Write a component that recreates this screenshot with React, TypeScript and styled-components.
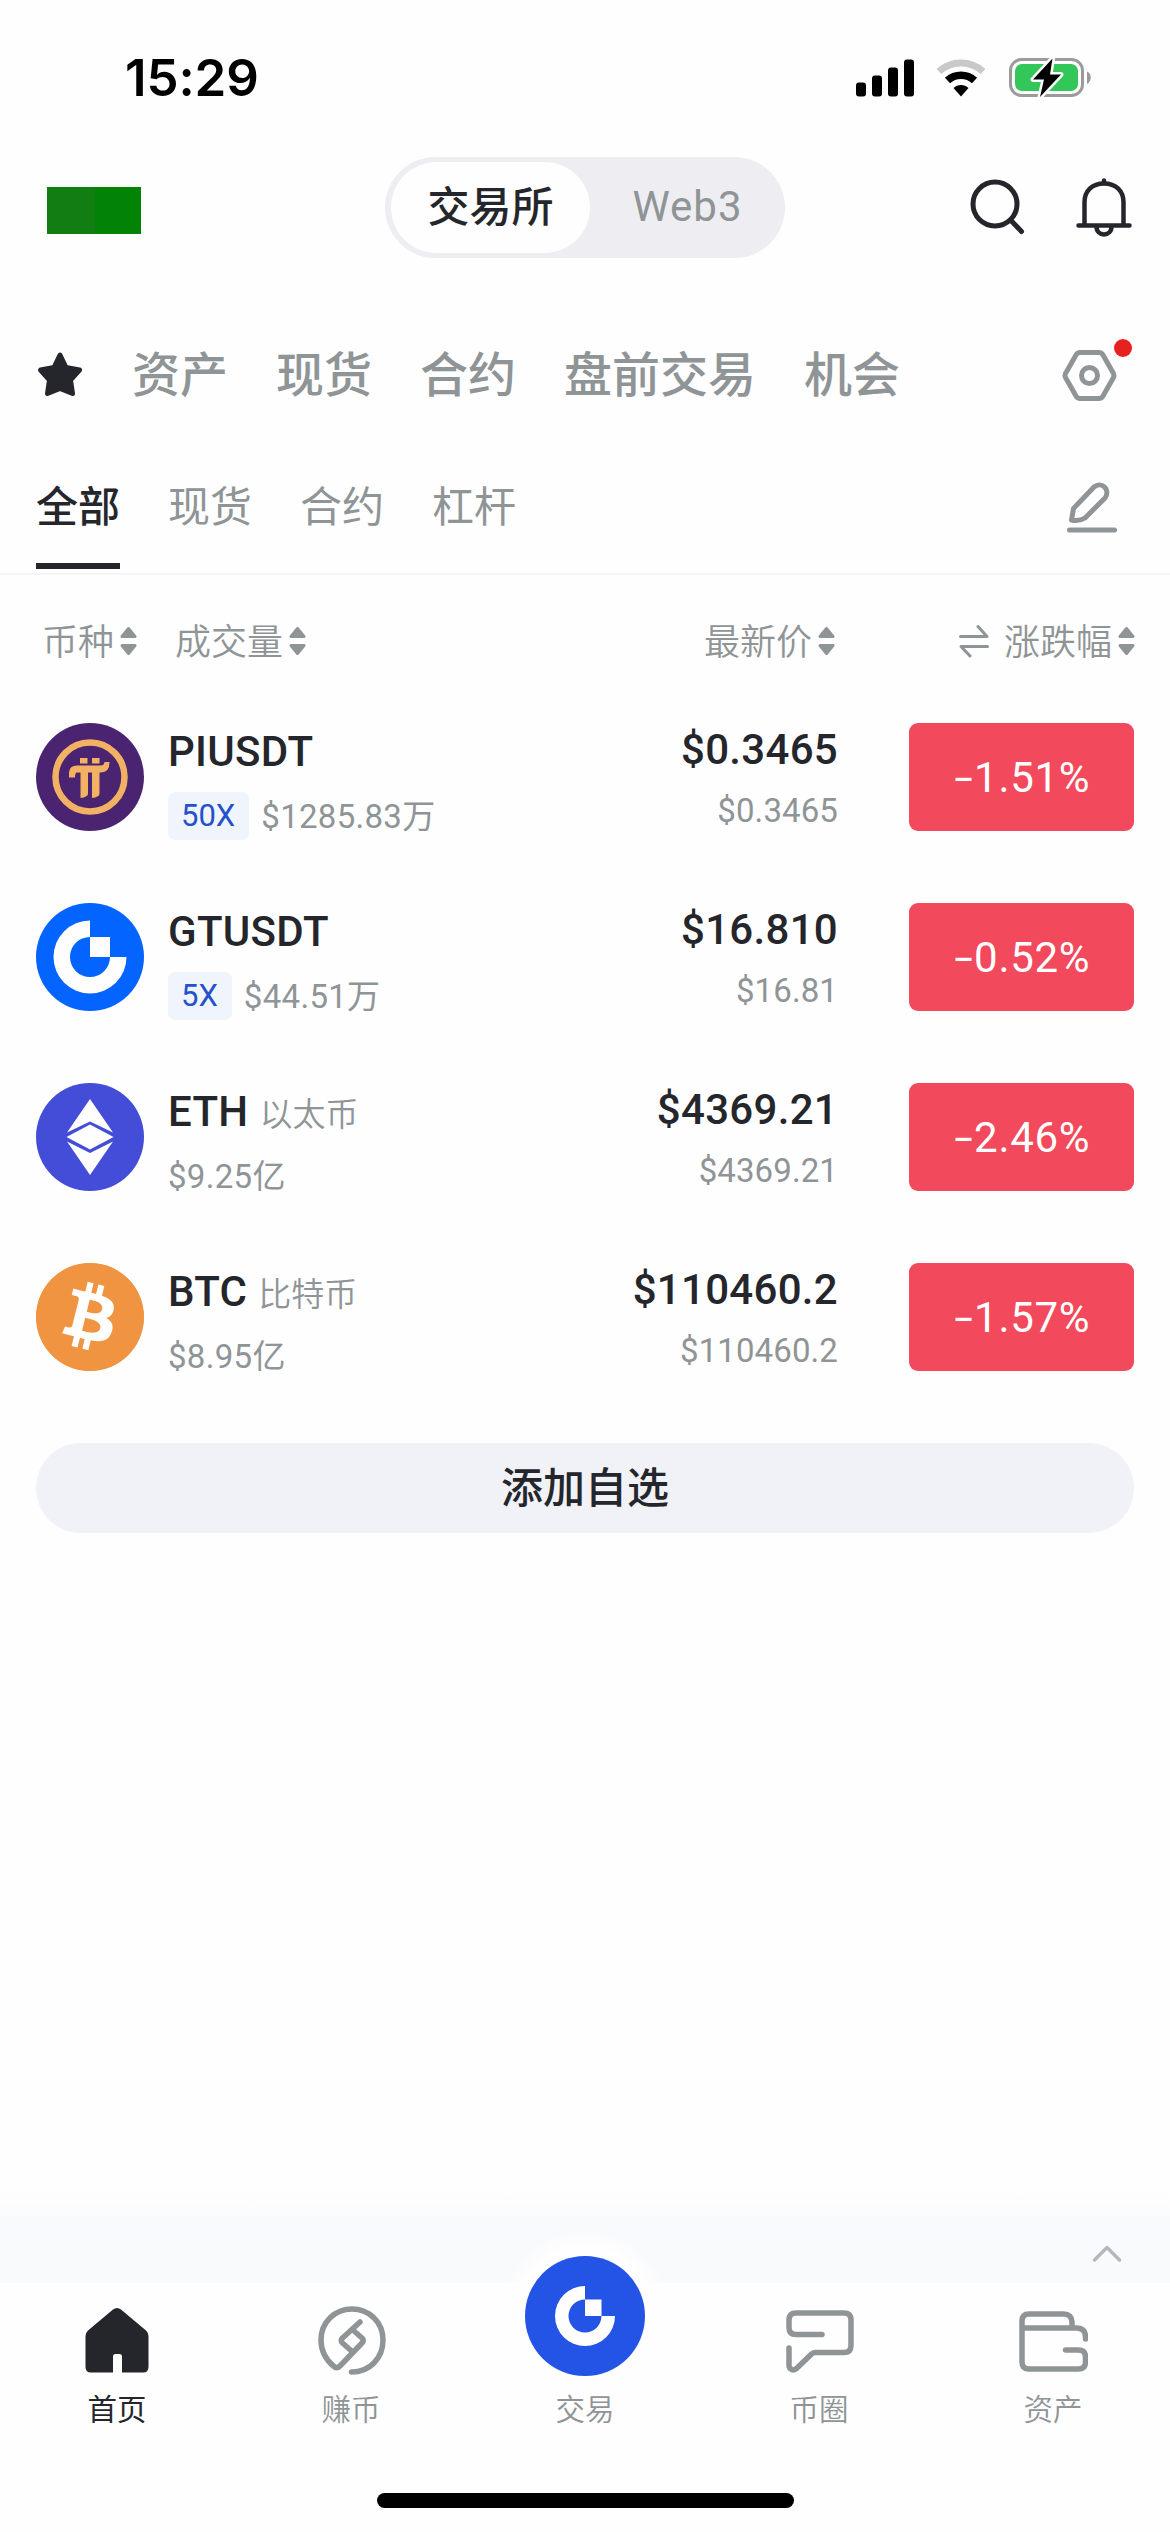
import React from "react";
import styled, { createGlobalStyle } from "styled-components";
import { SiBitcoin } from "react-icons/si";

const ink = "#25262c";
const muted = "#8f9496";

const GlobalStyle = createGlobalStyle`
  *, *::before, *::after { box-sizing: border-box; }
  body {
    margin: 0;
    background: #fefefe;
    font-family: Roboto, "Noto Sans CJK SC", sans-serif;
    color: ${ink};
  }
  svg { display: block; flex: none; }
`;

const Screen = styled.main`
  width: 1170px;
  height: 2532px;
  display: flex;
  flex-direction: column;
  background: #fefefe;
  overflow: hidden;
  white-space: nowrap;
`;

/* Status bar */
const StatusBar = styled.div`
  height: 156px;
  padding: 0 79px 0 125px;
  display: flex;
  align-items: center;
  justify-content: space-between;
`;
const Clock = styled.span`
  font-family: Inter, sans-serif;
  font-weight: 600;
  font-size: 51px;
  line-height: 60px;
  letter-spacing: -0.1px;
  color: #000;
`;
const StatusIcons = styled.div`
  display: flex;
  align-items: center;
`;

/* Header */
const Header = styled.header`
  height: 102px;
  padding: 0 38px 0 47px;
  display: grid;
  grid-template-columns: 338px 400px 1fr;
`;
const Brand = styled.div`
  width: 94px;
  height: 47px;
  margin-top: 31px;
  background: linear-gradient(90deg, #117d13 0 48px, #038306 48px);
`;
const Switch = styled.div`
  height: 101px;
  margin-top: 1px;
  padding: 5px 6px;
  display: flex;
  border-radius: 51px;
  background: #ededf2;
`;
const SwitchOption = styled.div<{ $active?: boolean }>`
  width: ${(p) => (p.$active ? 199 : 189)}px;
  height: 91px;
  padding-left: ${(p) => (p.$active ? 0 : 6)}px;
  border-radius: 46px;
  text-align: center;
  font-size: 42px;
  font-weight: ${(p) => (p.$active ? 500 : 400)};
  line-height: ${(p) => (p.$active ? 91 : 90)}px;
  letter-spacing: ${(p) => (p.$active ? 0 : 1)}px;
  color: ${(p) => (p.$active ? ink : muted)};
  background: ${(p) => (p.$active ? "#fefefe" : "transparent")};
`;
const HeaderActions = styled.div`
  display: flex;
  align-items: center;
  justify-content: flex-end;
  gap: 50px;
`;

/* Tabs */
const Tabs = styled.nav`
  height: 96px;
  margin-top: 68px;
  padding: 0 36px;
  display: flex;
  align-items: center;
  gap: 48px;
`;
const Tab = styled.span`
  font-size: 48px;
  font-weight: 500;
  line-height: 92px;
  padding-top: 3px;
  color: ${muted};
`;
const TabsEnd = styled.div`
  margin-left: auto;
  height: 96px;
`;
const SubTabs = styled.nav`
  height: 153px;
  padding: 23px 53px 0 36px;
  display: flex;
  gap: 48px;
  border-bottom: 2px solid #f5f5f6;
`;
const SubTab = styled.span<{ $active?: boolean }>`
  height: 124px;
  border-bottom: 6px solid ${(p) => (p.$active ? ink : "transparent")};
  font-size: 42px;
  font-weight: ${(p) => (p.$active ? 500 : 400)};
  line-height: 126px;
  color: ${(p) => (p.$active ? ink : muted)};
`;
const EditSlot = styled.div`
  margin-left: auto;
  padding-top: 36px;
`;

/* Table */
const TableHead = styled.div`
  height: 112px;
  padding: 20px 35px 0 42px;
  display: grid;
  grid-template-columns: 133px 1fr 131px 300px;
  align-items: center;
`;
const HeadCell = styled.div<{ $end?: boolean }>`
  display: flex;
  align-items: center;
  justify-content: ${(p) => (p.$end ? "flex-end" : "flex-start")};
  gap: 6px;
  font-size: 36px;
  font-weight: 350;
  line-height: 42px;
  color: ${muted};
`;
const HeadText = styled.span`
  padding-top: 3px;
`;
const Row = styled.div`
  height: 180px;
  padding: 36px 36px 36px;
  display: grid;
  grid-template-columns: 108px 1fr 300px 225px;
`;
const Coin = styled.div<{ $bg: string }>`
  width: 108px;
  height: 108px;
  border-radius: 50%;
  overflow: hidden;
  background: ${(p) => p.$bg};
`;
const Pair = styled.div`
  padding: 5px 0 0 24px;
`;
const PairName = styled.div`
  display: flex;
  height: 46px;
  align-items: baseline;
  font-size: 42px;
  font-weight: 500;
  line-height: 47px;
  letter-spacing: 0.3px;
`;
const PairAlias = styled.span`
  margin-left: 11px;
  font-size: 33px;
  font-weight: 350;
  letter-spacing: 0;
  color: ${muted};
`;
const PairMeta = styled.div`
  height: 48px;
  margin-top: 18px;
  display: flex;
  align-items: center;
`;
const Leverage = styled.span`
  height: 48px;
  margin-right: 12px;
  padding: 0 14px 0 13px;
  border-radius: 7px;
  background: #f0f5fd;
  color: #2450cc;
  font-size: 31px;
  line-height: 48px;
`;
const Volume = styled.span`
  font-size: 33px;
  line-height: 51px;
  letter-spacing: 0.3px;
  color: ${muted};
`;
const Prices = styled.div`
  padding-right: 71px;
  text-align: right;
`;
const Price = styled.div`
  margin-top: 3px;
  font-size: 42px;
  font-weight: 500;
  line-height: 48px;
  letter-spacing: 0.3px;
`;
const PriceSub = styled.div`
  margin-top: 16px;
  font-size: 33px;
  line-height: 42px;
  letter-spacing: 0.1px;
  color: ${muted};
`;
const Change = styled.div`
  height: 108px;
  border-radius: 9px;
  background: #f2495c;
  color: #fff;
  text-align: center;
  font-size: 42px;
  line-height: 109px;
  letter-spacing: 0.7px;
`;
const Sign = styled.span`
  display: inline-block;
  margin: 0 4px 0 5px;
  transform: scaleX(1.6);
`;
const AddButton = styled.button`
  height: 90px;
  margin: 36px 36px 0;
  border: 0;
  border-radius: 45px;
  background: #f1f2f7;
  color: ${ink};
  font: 500 42px/88px Roboto, "Noto Sans CJK SC", sans-serif;
  padding: 1px 0 0;
`;

/* Bottom dock */
const Ticker = styled.div`
  height: 99px;
  margin-top: auto;
  padding: 61px 48px 0 0;
  display: flex;
  justify-content: flex-end;
  background: linear-gradient(#fefefe 8px, #f9fafd 38px, #f9fafb);
`;
const BottomNav = styled.nav`
  height: 210px;
  padding-top: 20px;
  display: grid;
  grid-template-columns: repeat(5, 1fr);
`;
const NavItem = styled.div<{ $active?: boolean }>`
  display: flex;
  flex-direction: column;
  align-items: center;
  font-size: 29.5px;
  font-weight: ${(p) => (p.$active ? 400 : 350)};
  color: ${(p) => (p.$active ? ink : muted)};
`;
const NavIcon = styled.div`
  height: 73px;
  display: flex;
  align-items: flex-end;
  justify-content: center;
`;
const NavLabel = styled.span`
  margin-top: 17px;
  line-height: 34px;
`;
const TradeButton = styled.div`
  width: 120px;
  height: 120px;
  flex: none;
  border-radius: 50%;
  background: #2354e6;
  box-shadow: 0 0 14px 18px #fefefe;
`;
const HomeIndicator = styled.div`
  width: 417px;
  height: 15px;
  margin: 0 auto 24px;
  border-radius: 8px;
  background: #000;
`;

const SignalIcon = () => (
  <svg width="58" height="38" viewBox="0 0 58 38">
    <rect x="0" y="23.5" width="10" height="14" rx="3" />
    <rect x="16" y="16.5" width="10" height="21" rx="3" />
    <rect x="32" y="8.5" width="10" height="29" rx="3" />
    <rect x="48" y="0.5" width="10" height="37" rx="3" />
  </svg>
);

const WifiSvg = styled.svg`
  margin-left: 22px;
`;
const BatterySvg = styled.svg`
  margin-left: 23px;
`;

const WifiIcon = () => (
  <WifiSvg width="50" height="38" viewBox="0 0 50 38">
    <path d="M3 12.500C15 1 35 1 47 12.500" fill="none" stroke="#c9c9c9" strokeWidth="7" />
    <path d="M11.500 21.500C19 14.500 31 14.500 38.500 21.500" fill="none" stroke="#000" strokeWidth="7.500" />
    <path d="M17.500 29C21.500 25 28.500 25 32.500 29L25 37.500Z" />
  </WifiSvg>
);

const BatteryIcon = () => (
  <BatterySvg width="82" height="42" viewBox="0 0 82 42">
    <rect x="1.500" y="2.500" width="72" height="36" rx="11" fill="none" stroke="#9b9b9b" strokeWidth="3" />
    <rect x="6" y="7" width="63" height="27" rx="7" fill="#33c759" />
    <path d="M78 14.500C83 16 83 25 78 27Z" fill="#9b9b9b" />
    <path
      d="M43.500 1.500L24 22.500H35L31 40L52 17.500H41Z"
      fill="#000"
      stroke="#fefefe"
      strokeWidth="5"
      strokeLinejoin="round"
      paintOrder="stroke"
    />
  </BatterySvg>
);

const SearchIcon = () => (
  <svg width="56" height="60" viewBox="0 0 56 60" fill="none" stroke={ink} strokeWidth="5" strokeLinecap="round">
    <circle cx="25" cy="27" r="22" />
    <path d="M41.500 44L51.500 54.500" />
  </svg>
);

const BellIcon = () => (
  <svg width="56" height="60" viewBox="0 0 56 60" fill="none" stroke={ink} strokeWidth="4.500" strokeLinecap="round">
    <path d="M8.500 47V25.500C8.500 14 16 6.500 28 6.500C40 6.500 47.500 14 47.500 25.500V47" />
    <path d="M2.500 48.500H53.500M28 3.500V6M20.500 49.500C20.500 60 35.500 60 35.500 49.500" />
  </svg>
);

const StarIcon = () => (
  <svg width="48" height="48" viewBox="0 0 48 48" fill={ink} stroke={ink} strokeWidth="5" strokeLinejoin="round">
    <path d="M24 5L30 17.500L43.500 20L34.500 30L36.500 43.500L24 38.500L11.500 43.500L13.500 30L4.500 20L18 17.500Z" />
  </svg>
);

const SettingsIcon = () => (
  <svg width="74" height="96" viewBox="0 0 74 96" fill="none" stroke={muted} strokeWidth="5" strokeLinejoin="round">
    <path d="M20 26.500H39Q41.500 26.500 43 29L53.500 47.500Q54.500 49.500 53.500 51.500L43 70Q41.500 72.500 39 72.500H20Q17.500 72.500 16 70L5.500 51.500Q4.500 49.500 5.500 47.500L16 29Q17.500 26.500 20 26.500Z" />
    <circle cx="29.500" cy="49.500" r="8" />
    <circle cx="63" cy="22" r="9" fill="#e6211f" stroke="none" />
  </svg>
);

const EditIcon = () => (
  <svg width="50" height="54" viewBox="0 0 50 54" fill="none" stroke={muted} strokeWidth="5" strokeLinecap="round" strokeLinejoin="round">
    <path d="M4.500 39L6.500 27.500L27 6C34 0 44 8 38 17L18 37C14 39.500 9 40 4.500 39Z" />
    <path d="M2.500 49H47.500" />
  </svg>
);

const SortIcon = () => (
  <svg width="17" height="30" viewBox="0 0 17 30" fill={muted} stroke={muted} strokeWidth="3" strokeLinejoin="round">
    <path d="M8.500 2.500L15 10.500H2Z" />
    <path d="M8.500 27.500L15 19.500H2Z" />
  </svg>
);

const SwapIcon = () => (
  <svg width="30" height="34" viewBox="0 0 30 34" fill="none" stroke={muted} strokeWidth="3" strokeLinecap="round" strokeLinejoin="round">
    <path d="M1.500 12.500H28L19 2.500M28.500 22.500H2L11 32" />
  </svg>
);

const PiLogo = () => (
  <svg width="108" height="108" viewBox="0 0 108 108">
    <circle cx="54" cy="54" r="34.500" fill="none" stroke="#f3b263" strokeWidth="6.500" />
    <g fill="#f3b263">
      <path d="M44 35H51.500V40.500H44ZM56 35H63.500V40.500H56Z" />
      <path d="M33 54.500V49.500Q33.500 42.500 41 42.500H65Q68 42.500 68.500 39H73.500Q73.500 49.500 65 49.500H63.500V71Q63 74 56 75V49.500H52V71Q51.500 74 44.500 75V49.500H41Q39 49.500 39 54.500Z" />
    </g>
  </svg>
);

const GateMark = ({ size, r, inner }: { size: number; r: number; inner: number }) => {
  const c = size / 2;
  return (
    <svg width={size} height={size} viewBox={`0 0 ${size} ${size}`} fill="#fefefe">
      <path
        d={`M${c} ${c - r}A${r} ${r} 0 1 0 ${c + r} ${c}H${c + inner}A${inner} ${inner} 0 1 1 ${c} ${c - inner}Z`}
      />
      <rect x={c} y={c - inner} width={inner} height={inner} />
    </svg>
  );
};

const EthLogo = () => (
  <svg width="108" height="108" viewBox="0 0 108 108" fill="#fefefe">
    <path d="M54 16L77 49.500L54 38.500L31 49.500Z" />
    <path d="M54 41.500L77.500 54L54 66.500L30.500 54Z" />
    <path d="M31 58.500L54 70L77 58.500L54 92Z" />
  </svg>
);

const BtcLogo = () => (
  <svg width="108" height="108" viewBox="0 0 108 108">
    <circle cx="54" cy="54" r="46" fill="#fefefe" />
    <SiBitcoin size={108} color="#f09441" />
  </svg>
);

const ChevronIcon = () => (
  <svg width="30" height="18" viewBox="0 0 30 18" fill="none" stroke="#b5b7ba" strokeWidth="3.500" strokeLinecap="round" strokeLinejoin="round">
    <path d="M2.500 15L15 2.500L27.500 15" />
  </svg>
);

const HomeIcon = () => (
  <svg width="64" height="68" viewBox="0 0 64 68" fill={ink}>
    <path d="M28 1.500Q32 -1.500 36 1.500L61 22.500Q63.500 25 63.500 28V59Q63.500 64.500 58 64.500H37V48.500Q37 46 34.500 46H30.500Q28 46 28 48.500V64.500H6Q0.500 64.500 0.500 59V28Q0.500 25 3 22.500Z" />
  </svg>
);

const EarnIcon = () => (
  <svg width="70" height="72" viewBox="0 0 70 72" fill="none" stroke={muted} strokeWidth="5.500" strokeLinecap="round" strokeLinejoin="round">
    <path d="M35.500 68C54 68 67 54 67 36C67 18 53 5 36 5C19 5 5 18 5 36C5 48 10 56 18 62.500Q21 65 24 62L46 39Q48.500 36.500 46 34L37.500 26.500" />
    <path d="M44 18L26.500 34Q24 36.500 26.500 39L35 46.500" />
  </svg>
);

const CircleIcon = () => (
  <svg width="70" height="66" viewBox="0 0 70 66" fill="none" stroke={muted} strokeWidth="5.500" strokeLinecap="round" strokeLinejoin="round">
    <path d="M38 24.500H12Q5 24.500 5 17.500V10Q5 3 12 3H60Q67 3 67 10V35.500Q67 42.500 60 42.500H31Q29 42.500 27 44.500L12.500 58.500Q9 61 7 59Q5 58 5 55V38" />
  </svg>
);

const WalletIcon = () => (
  <svg width="70" height="66" viewBox="0 0 70 66" fill="none" stroke={muted} strokeWidth="5.500" strokeLinecap="round" strokeLinejoin="round">
    <path d="M4 18V11Q4 4 11 4H45.500Q53.500 4 54 12V18M4 18H58.500Q67.500 18 67.500 27V29M47.500 40H60.500Q67.500 40 67.500 47V52Q67.500 59 60.500 59H11Q4 59 4 52V18" />
  </svg>
);

const coins = [
  { name: "PIUSDT", leverage: "50X", volume: "$1285.83万", price: "$0.3465", sub: "$0.3465", change: "1.51%", bg: "#4a2470", logo: <PiLogo /> },
  { name: "GTUSDT", leverage: "5X", volume: "$44.51万", price: "$16.810", sub: "$16.81", change: "0.52%", bg: "#0464ff", logo: <GateMark size={108} r={36.5} inner={20} /> },
  { name: "ETH", alias: "以太币", volume: "$9.25亿", price: "$4369.21", sub: "$4369.21", change: "2.46%", bg: "#434dd8", logo: <EthLogo /> },
  { name: "BTC", alias: "比特币", volume: "$8.95亿", price: "$110460.2", sub: "$110460.2", change: "1.57%", bg: "#f09441", logo: <BtcLogo /> },
];

const navItems = [
  { label: "首页", icon: <HomeIcon />, active: true },
  { label: "赚币", icon: <EarnIcon /> },
  { label: "交易", icon: <TradeButton><GateMark size={120} r={30} inner={16.5} /></TradeButton> },
  { label: "币圈", icon: <CircleIcon /> },
  { label: "资产", icon: <WalletIcon /> },
];

export default function App() {
  return (
    <>
      <GlobalStyle />
      <Screen>
        <StatusBar>
          <Clock>15:29</Clock>
          <StatusIcons>
            <SignalIcon />
            <WifiIcon />
            <BatteryIcon />
          </StatusIcons>
        </StatusBar>

        <Header>
          <Brand />
          <Switch>
            <SwitchOption $active>交易所</SwitchOption>
            <SwitchOption>Web3</SwitchOption>
          </Switch>
          <HeaderActions>
            <SearchIcon />
            <BellIcon />
          </HeaderActions>
        </Header>

        <Tabs>
          <StarIcon />
          {["资产", "现货", "合约", "盘前交易", "机会"].map((t) => (
            <Tab key={t}>{t}</Tab>
          ))}
          <TabsEnd>
            <SettingsIcon />
          </TabsEnd>
        </Tabs>

        <SubTabs>
          {["全部", "现货", "合约", "杠杆"].map((t, i) => (
            <SubTab key={t} $active={i === 0}>{t}</SubTab>
          ))}
          <EditSlot>
            <EditIcon />
          </EditSlot>
        </SubTabs>

        <TableHead>
          <HeadCell><HeadText>币种</HeadText><SortIcon /></HeadCell>
          <HeadCell><HeadText>成交量</HeadText><SortIcon /></HeadCell>
          <HeadCell $end><HeadText>最新价</HeadText><SortIcon /></HeadCell>
          <HeadCell $end>
            <SwapIcon />
            <HeadText>&nbsp;涨跌幅</HeadText>
            <SortIcon />
          </HeadCell>
        </TableHead>

        {coins.map((c) => (
          <Row key={c.name}>
            <Coin $bg={c.bg}>{c.logo}</Coin>
            <Pair>
              <PairName>
                {c.name}
                {c.alias && <PairAlias>{c.alias}</PairAlias>}
              </PairName>
              <PairMeta>
                {c.leverage && <Leverage>{c.leverage}</Leverage>}
                <Volume>{c.volume}</Volume>
              </PairMeta>
            </Pair>
            <Prices>
              <Price>{c.price}</Price>
              <PriceSub>{c.sub}</PriceSub>
            </Prices>
            <Change><Sign>-</Sign>{c.change}</Change>
          </Row>
        ))}

        <AddButton>添加自选</AddButton>

        <Ticker>
          <ChevronIcon />
        </Ticker>
        <BottomNav>
          {navItems.map((n) => (
            <NavItem key={n.label} $active={n.active}>
              <NavIcon>{n.icon}</NavIcon>
              <NavLabel>{n.label}</NavLabel>
            </NavItem>
          ))}
        </BottomNav>
        <HomeIndicator />
      </Screen>
    </>
  );
}
